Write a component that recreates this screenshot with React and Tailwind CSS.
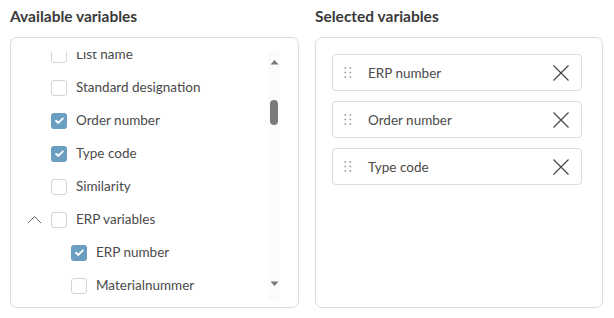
const available = [
  { label: 'List name', checked: false },
  { label: 'Standard designation', checked: false },
  { label: 'Order number', checked: true },
  { label: 'Type code', checked: true },
  { label: 'Similarity', checked: false },
  { label: 'ERP variables', checked: false, group: true },
  { label: 'ERP number', checked: true, nested: true },
  { label: 'Materialnummer', checked: false, nested: true },
];

const selected = ['ERP number', 'Order number', 'Type code'];

function Checkbox({ checked }) {
  if (checked) {
    return (
      <span className="w-[16px] h-[16px] rounded-[3px] bg-[#6a9fc2] flex items-center justify-center shrink-0">
        <svg width="11" height="11" viewBox="0 0 12 12" fill="none">
          <path d="M2.2 6.3l2.5 2.4 5-5" stroke="white" strokeWidth="2" strokeLinecap="round" strokeLinejoin="round" />
        </svg>
      </span>
    );
  }
  return <span className="w-[16px] h-[16px] rounded-[3px] border border-[#d4d4d4] bg-white shrink-0" />;
}

function DragHandle() {
  return (
    <svg width="8" height="12" viewBox="0 0 8 12" className="shrink-0">
      {[1, 5.5, 10].map((y) => (
        <g key={y}>
          <rect x="0.5" y={y - 0.8} width="1.6" height="1.6" fill="#9a9a9a" />
          <rect x="5.5" y={y - 0.8} width="1.6" height="1.6" fill="#9a9a9a" />
        </g>
      ))}
    </svg>
  );
}

export default function App() {
  return (
    <div className="w-[614px] h-[318px] bg-white flex gap-[16px] pl-[10px] pr-[11px] font-['Lato',sans-serif] text-[#4a4a4a]">
      <div className="w-[289px] flex flex-col">
        <h2 className="text-[15.5px] font-bold text-[#3a3a3a] h-[37px] pt-[6px] leading-[20px]">Available variables</h2>
        <div className="h-[271px] border border-[#dcdcdc] rounded-[7px] flex pt-[14px] pb-[6px]">
          <div className="flex-1 overflow-hidden">
            <div className="-mt-[14px] flex flex-col">
              {available.map((it) => (
                <div
                  key={it.label}
                  className={`h-[33px] flex items-center gap-[9px] text-[13.5px] ${it.nested ? 'pl-[60px]' : 'pl-[40px]'}`}
                >
                  {it.group && (
                    <svg width="15" height="9" viewBox="0 0 15 9" className="-ml-[24px] shrink-0">
                      <path d="M1 8l6.5-6.5L14 8" stroke="#666" strokeWidth="1" fill="none" />
                    </svg>
                  )}
                  <Checkbox checked={it.checked} />
                  <span>{it.label}</span>
                </div>
              ))}
            </div>
          </div>
          <div className="w-[12px] mr-[18px] -mt-[1px] flex flex-col items-center bg-[#fbfbfb]">
            <svg width="9" height="6" viewBox="0 0 9 6" className="mt-[8px]">
              <path d="M0.5 5.5L4.5 1l4 4.5z" fill="#777" />
            </svg>
            <div className="w-[8px] h-[25px] rounded-full bg-[#7a7a7a] mt-[35px]" />
            <div className="flex-1" />
            <svg width="9" height="6" viewBox="0 0 9 6" className="mb-[14px]">
              <path d="M0.5 0.5L4.5 5l4-4.5z" fill="#777" />
            </svg>
          </div>
        </div>
      </div>
      <div className="flex-1 flex flex-col">
        <h2 className="text-[15.5px] font-bold text-[#3a3a3a] h-[37px] pt-[6px] leading-[20px]">Selected variables</h2>
        <div className="h-[271px] border border-[#dcdcdc] rounded-[7px] pt-[16px] pl-[16px] pr-[20px] flex flex-col gap-[10px]">
          {selected.map((s) => (
            <div key={s} className="h-[37px] border border-[#dcdcdc] rounded-[4px] flex items-center pl-[11px] pr-[11px]">
              <DragHandle />
              <span className="ml-[16px] pt-[1px] text-[13.5px] flex-1">{s}</span>
              <svg width="18" height="18" viewBox="0 0 18 18">
                <path d="M1.5 1.5l15 15M16.5 1.5l-15 15" stroke="#444" strokeWidth="1.2" />
              </svg>
            </div>
          ))}
        </div>
      </div>
    </div>
  );
}
